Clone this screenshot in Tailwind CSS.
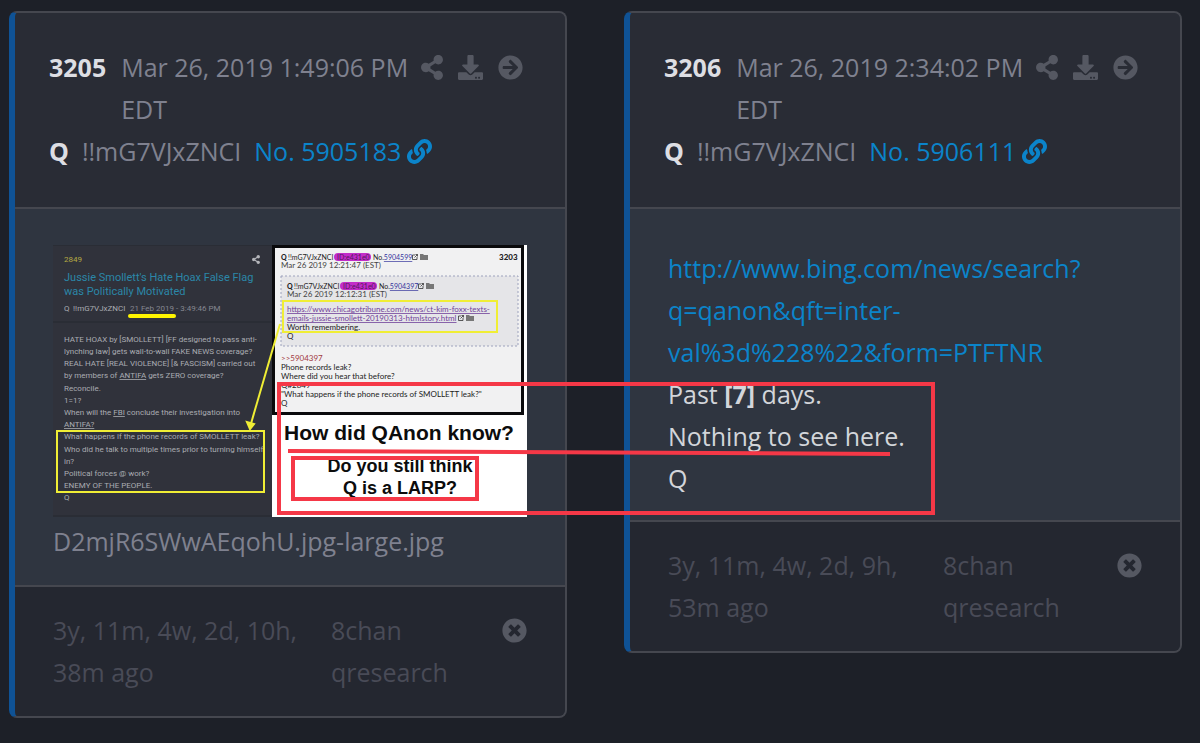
<!DOCTYPE html>
<html lang="en">

<head>
    <meta charset="UTF-8">
    <meta name="viewport" content="width=device-width, initial-scale=1.0">
    <title>Posts 3205 - 3206</title>
    <script src="https://cdn.jsdelivr.net/npm/@tailwindcss/browser@4"></script>
</head>

<body class="relative min-h-screen bg-[#1d2028] font-['Open_Sans',sans-serif] text-[25px] leading-[42px] text-[#7f818f]">
    <!-- Icon set -->
    <svg class="hidden" aria-hidden="true">
        <symbol id="share" viewBox="0 0 448 512"><path d="M352 320c-22.608 0-43.387 7.819-59.79 20.895l-102.486-64.054a96.551 96.551 0 0 0 0-41.683l102.486-64.054C308.613 184.181 329.392 192 352 192c53.019 0 96-42.981 96-96S405.019 0 352 0s-96 42.981-96 96c0 7.158.79 14.13 2.276 20.841L155.79 180.895C139.387 167.819 118.608 160 96 160c-53.019 0-96 42.981-96 96s42.981 96 96 96c22.608 0 43.387-7.819 59.79-20.895l102.486 64.054A96.301 96.301 0 0 0 256 416c0 53.019 42.981 96 96 96s96-42.981 96-96-42.981-96-96-96z"/></symbol>
        <symbol id="download" viewBox="0 0 512 512"><path d="M216 0h80c13.3 0 24 10.7 24 24v168h87.7c17.8 0 26.7 21.5 14.1 34.1L269.7 378.3c-7.5 7.5-19.8 7.5-27.3 0L90.1 226.1c-12.6-12.6-3.7-34.1 14.1-34.1H192V24c0-13.3 10.7-24 24-24zm296 376v112c0 13.3-10.7 24-24 24H24c-13.3 0-24-10.7-24-24V376c0-13.3 10.7-24 24-24h146.7l49 49c20.1 20.1 52.5 20.1 72.6 0l49-49H488c13.3 0 24 10.7 24 24zm-124 88c0-11-9-20-20-20s-20 9-20 20 9 20 20 20 20-9 20-20zm64 0c0-11-9-20-20-20s-20 9-20 20 9 20 20 20 20-9 20-20z"/></symbol>
        <symbol id="arrow" viewBox="0 0 512 512"><path d="M256 8c137 0 248 111 248 248S393 504 256 504 8 393 8 256 119 8 256 8zm-28.9 143.6l75.5 72.4H120c-13.3 0-24 10.7-24 24v16c0 13.3 10.7 24 24 24h182.6l-75.5 72.4c-9.7 9.3-9.9 24.8-.4 34.3l11 10.9c9.4 9.4 24.6 9.4 33.9 0L404.3 273c9.4-9.4 9.4-24.6 0-33.9L271.6 106.3c-9.4-9.4-24.6-9.4-33.9 0l-11 10.9c-9.5 9.6-9.3 25.1.4 34.4z"/></symbol>
        <symbol id="link" viewBox="0 0 512 512"><path d="M326.612 185.391c59.747 59.809 58.927 155.698.36 214.59-.11.12-.24.25-.36.37l-67.2 67.2c-59.27 59.27-155.699 59.262-214.96 0-59.27-59.26-59.27-155.7 0-214.96l37.106-37.106c9.84-9.84 26.786-3.3 27.294 10.606.648 17.722 3.826 35.527 9.69 52.721 1.986 5.822.567 12.262-3.783 16.612l-13.087 13.087c-28.026 28.026-28.905 73.66-1.155 101.96 28.024 28.579 74.086 28.749 102.325.51l67.2-67.19c28.191-28.191 28.073-73.757 0-101.83-3.701-3.694-7.429-6.564-10.341-8.569a16.037 16.037 0 0 1-6.947-12.606c-.396-10.567 3.348-21.456 11.698-29.806l21.054-21.055c5.521-5.521 14.182-6.199 20.584-1.731a152.482 152.482 0 0 1 20.522 17.197zM467.547 44.449c-59.261-59.262-155.69-59.27-214.96 0l-67.2 67.2c-.12.12-.25.25-.36.37-58.566 58.892-59.387 154.781.36 214.59a152.454 152.454 0 0 0 20.521 17.196c6.402 4.468 15.064 3.789 20.584-1.731l21.054-21.055c8.35-8.35 12.094-19.239 11.698-29.806a16.037 16.037 0 0 0-6.947-12.606c-2.912-2.005-6.64-4.875-10.341-8.569-28.073-28.073-28.191-73.639 0-101.83l67.2-67.19c28.239-28.239 74.3-28.069 102.325.51 27.75 28.3 26.872 73.934-1.155 101.96l-13.087 13.087c-4.35 4.35-5.769 10.79-3.783 16.612 5.864 17.194 9.042 34.999 9.69 52.721.509 13.906 17.454 20.446 27.294 10.606l37.106-37.106c59.271-59.259 59.271-155.699.001-214.959z"/></symbol>
        <symbol id="close" viewBox="0 0 512 512"><path d="M256 8C119 8 8 119 8 256s111 248 248 248 248-111 248-248S393 8 256 8zm121.6 313.1c4.7 4.7 4.7 12.3 0 17L338 377.6c-4.7 4.7-12.3 4.7-17 0L256 312l-65.1 65.6c-4.7 4.7-12.3 4.7-17 0L134.4 338c-4.7-4.7-4.7-12.3 0-17l65.6-65-65.6-65.1c-4.7-4.7-4.7-12.3 0-17l39.6-39.6c4.7-4.7 12.3-4.7 17 0l65 65.7 65.1-65.6c4.7-4.7 12.3-4.7 17 0l39.6 39.6c4.7 4.7 4.7 12.3 0 17L312 256l65.6 65.1z"/></symbol>
        <symbol id="external" viewBox="0 0 6 6"><path d="M3 1H.5v4.500H5V3M2.500 3.500 5.500.5M3.500.5h2v2" fill="none" stroke="#333" stroke-width=".8"/></symbol>
        <symbol id="folder" viewBox="0 0 8 6"><path d="M0 0h3l1 1h4v5H0z" fill="#777"/></symbol>
    </svg>

    <main class="grid grid-cols-2 items-start gap-[57px] pt-[11px] pr-[18px] pl-[9px]">
        <!-- Post 3205 -->
        <article class="overflow-hidden rounded-lg border-2 border-l-6 border-[#45474f] border-l-[#0f5295] bg-[#2f3540]">
            <header class="border-b-2 border-[#45474f] bg-[#292c35] px-[34px] pt-[33px] pb-[35px]">
                <div class="flex items-start gap-3">
                    <strong class="mr-[3px] text-[#dddee3]">3205</strong>
                    <time class="w-[288px] shrink-0">Mar 26, 2019 1:49:06 PM EDT</time>
                    <div class="flex h-[42px] items-center gap-[15px] text-[#555862]">
                        <button aria-label="Share"><svg class="h-[25px] w-[22px] fill-current"><use href="#share"/></svg></button>
                        <button aria-label="Download"><svg class="size-[25px] fill-current"><use href="#download"/></svg></button>
                        <button aria-label="Open"><svg class="size-[25px] fill-current"><use href="#arrow"/></svg></button>
                    </div>
                </div>
                <div class="flex items-center gap-[13px]">
                    <strong class="text-[#dddee3]">Q</strong>
                    <span>!!mG7VJxZNCI</span>
                    <a href="#5905183" class="flex items-center gap-[6px] text-[#0b84ca]">No. 5905183
                        <svg class="size-[25px] fill-current"><use href="#link"/></svg></a>
                </div>
            </header>

            <div class="px-[38px] pt-9 pb-[23px]">
                <!-- Attached picture -->
                <svg class="mb-[3px] block w-full" viewBox="0 0 474 272" role="img" aria-label="D2mjR6SWwAEqohU.jpg-large.jpg">
                    <rect width="219" height="272" fill="#30323b"/>
                    <path d="M0 0h219M0 77h219M0 271h219" stroke="#252830"/>
                    <g font-family="Roboto, sans-serif" font-size="8" fill="#aaacb2">
                        <text x="11" y="17" fill="#b5a943">2849</text>
                        <g font-size="11" fill="#2b87a8">
                            <text x="11" y="36">Jussie Smollett's Hate Hoax False Flag</text>
                            <text x="11" y="50">was Politically Motivated</text>
                        </g>
                        <text x="11" y="66">Q</text>
                        <text x="20" y="66">!!mG7VJxZNCI</text>
                        <text x="77" y="66" fill="#858790">21 Feb 2019 - 3:49:46 PM</text>
                        <text x="11" y="97">HATE HOAX by [SMOLLETT] [FF designed to pass anti-</text>
                        <text x="11" y="109">lynching law] gets wall-to-wall FAKE NEWS coverage?</text>
                        <text x="11" y="121">REAL HATE [REAL VIOLENCE] [&amp; FASCISM] carried out</text>
                        <text x="11" y="133">by members of <tspan text-decoration="underline">ANTIFA</tspan> gets ZERO coverage?</text>
                        <text x="11" y="146">Reconcile.</text>
                        <text x="11" y="158">1=1?</text>
                        <text x="11" y="170">When will the <tspan text-decoration="underline">FBI</tspan> conclude their investigation into</text>
                        <text x="11" y="182" text-decoration="underline">ANTIFA?</text>
                        <text x="11" y="194">What happens if the phone records of SMOLLETT leak?</text>
                        <text x="11" y="207">Who did he talk to multiple times prior to turning himself</text>
                        <text x="11" y="219">in?</text>
                        <text x="11" y="231">Political forces @ work?</text>
                        <text x="11" y="243">ENEMY OF THE PEOPLE.</text>
                        <text x="11" y="255">Q</text>
                    </g>
                    <use href="#share" x="199" y="10" width="8" height="9" fill="#b4b5ba"/>

                    <rect x="219" width="255" height="272" fill="#fff"/>
                    <rect x="220.500" y="1.500" width="249" height="167" fill="#f1f1f2" stroke="#0a0a0c" stroke-width="3"/>
                    <rect x="228" y="31" width="237" height="70" fill="#e5e5e8" stroke="#9da2bd" stroke-dasharray="2 2"/>
                    <rect x="281" y="8" width="37" height="8" rx="4" fill="#c22cc9"/>
                    <rect x="287" y="37" width="37" height="8" rx="4" fill="#c22cc9"/>
                    <g font-family="Lato, sans-serif" font-size="7" fill="#222">
                        <text x="228" y="15" font-weight="900">Q</text>
                        <text x="235" y="15">!!mG7VJxZNCI</text>
                        <text x="284" y="15" fill="#521a59">ID:e431e0</text>
                        <text x="320" y="15">No.<tspan fill="#34349c" text-decoration="underline">5904599</tspan></text>
                        <text x="446" y="15" font-size="8" font-weight="900">3203</text>
                        <text x="228" y="23" font-size="8" fill="#444">Mar 26 2019 12:21:47 (EST)</text>
                        <text x="234" y="44" font-weight="900">Q</text>
                        <text x="241" y="44">!!mG7VJxZNCI</text>
                        <text x="290" y="44" fill="#521a59">ID:e431e0</text>
                        <text x="326" y="44">No.<tspan fill="#34349c" text-decoration="underline">5904397</tspan></text>
                        <text x="234" y="52" font-size="8" fill="#444">Mar 26 2019 12:12:31 (EST)</text>
                        <g font-size="8">
                            <g fill="#71439a" text-decoration="underline">
                                <text x="234" y="67">https://www.chicagotribune.com/news/ct-kim-foxx-texts-</text>
                                <text x="234" y="76">emails-jussie-smollett-20190313-htmlstory.html</text>
                            </g>
                            <text x="234" y="85">Worth remembering.</text>
                            <text x="234" y="94">Q</text>
                            <text x="228" y="116" fill="#a23a42">&gt;&gt;5904397</text>
                            <text x="228" y="125">Phone records leak?</text>
                            <text x="228" y="134">Where did you hear that before?</text>
                            <text x="228" y="143">Q#2849</text>
                            <text x="228" y="152">"What happens if the phone records of SMOLLETT leak?"</text>
                            <text x="228" y="161">Q</text>
                        </g>
                    </g>
                    <use href="#external" x="359" y="9" width="6" height="6"/>
                    <use href="#folder" x="367" y="9" width="8" height="6"/>
                    <use href="#external" x="365" y="38" width="6" height="6"/>
                    <use href="#folder" x="373" y="38" width="8" height="6"/>
                    <use href="#external" x="405" y="70" width="6" height="6"/>
                    <use href="#folder" x="413" y="70" width="8" height="6"/>
                    <g font-family="'Liberation Sans', Arial, sans-serif" font-weight="700" fill="#0c0c0c" text-anchor="middle">
                        <text x="346" y="195" font-size="21">How did QAnon know?</text>
                        <text x="347" y="227" font-size="18">Do you still think</text>
                        <text x="347" y="249" font-size="18">Q is a LARP?</text>
                    </g>
                    <!-- Yellow marker -->
                    <g fill="none" stroke="#f0ee35" stroke-width="2">
                        <path d="M77 71h44" stroke="#fff500" stroke-width="4" stroke-linecap="round"/>
                        <rect x="4" y="186" width="207" height="61"/>
                        <rect x="230" y="56" width="214" height="31"/>
                        <path d="M227 79 197 182"/>
                        <path d="m194 177 3 7 4-5z" fill="#f0ee35"/>
                    </g>
                </svg>
                <p>D2mjR6SWwAEqohU.jpg-large.jpg</p>
            </div>

            <footer class="flex items-start border-t-2 border-[#45474f] bg-[#242730] px-[38px] pt-[22px] pb-[23px] text-[#494b57]">
                <p class="w-[278px] pr-8">3y, 11m, 4w, 2d, 10h, 38m ago</p>
                <p class="w-[130px]">8chan qresearch</p>
                <button class="ml-auto flex h-[42px] items-center text-[#555862]" aria-label="Close"><svg class="size-[25px] fill-current"><use href="#close"/></svg></button>
            </footer>
        </article>

        <!-- Post 3206 -->
        <article class="overflow-hidden rounded-lg border-2 border-l-6 border-[#45474f] border-l-[#0f5295] bg-[#2f3540]">
            <header class="border-b-2 border-[#45474f] bg-[#292c35] px-[34px] pt-[33px] pb-[35px]">
                <div class="flex items-start gap-3">
                    <strong class="mr-[3px] text-[#dddee3]">3206</strong>
                    <time class="w-[288px] shrink-0">Mar 26, 2019 2:34:02 PM EDT</time>
                    <div class="flex h-[42px] items-center gap-[15px] text-[#555862]">
                        <button aria-label="Share"><svg class="h-[25px] w-[22px] fill-current"><use href="#share"/></svg></button>
                        <button aria-label="Download"><svg class="size-[25px] fill-current"><use href="#download"/></svg></button>
                        <button aria-label="Open"><svg class="size-[25px] fill-current"><use href="#arrow"/></svg></button>
                    </div>
                </div>
                <div class="flex items-center gap-[13px]">
                    <strong class="text-[#dddee3]">Q</strong>
                    <span>!!mG7VJxZNCI</span>
                    <a href="#5906111" class="flex items-center gap-[6px] text-[#0b84ca]">No. 5906111
                        <svg class="size-[25px] fill-current"><use href="#link"/></svg></a>
                </div>
            </header>

            <div class="px-[38px] pt-[38px] pb-[21px] text-[#d3d5da]">
                <a href="#bing" class="block text-[#0b84ca]">http://www.bing.com/news/search?<br>q=qanon&amp;qft=inter-<br>val%3d%228%22&amp;form=PTFTNR</a>
                <p>Past <strong>[7]</strong> days.</p>
                <p>Nothing to see here.</p>
                <p>Q</p>
            </div>

            <footer class="flex items-start border-t-2 border-[#45474f] bg-[#242730] px-[38px] pt-[22px] pb-[23px] text-[#494b57]">
                <p class="w-[275px] pr-8">3y, 11m, 4w, 2d, 9h, 53m ago</p>
                <p class="w-[130px]">8chan qresearch</p>
                <button class="ml-auto flex h-[42px] items-center text-[#555862]" aria-label="Close"><svg class="size-[25px] fill-current"><use href="#close"/></svg></button>
            </footer>
        </article>
    </main>

    <!-- Red marker over both posts -->
    <svg class="pointer-events-none absolute inset-0 h-full w-full" fill="none" stroke="#f53847" stroke-width="4" aria-hidden="true">
        <rect x="279" y="384" width="654" height="129"/>
        <rect x="293" y="458" width="184" height="41"/>
        <path d="M288 451 890 454"/>
    </svg>
</body>

</html>
